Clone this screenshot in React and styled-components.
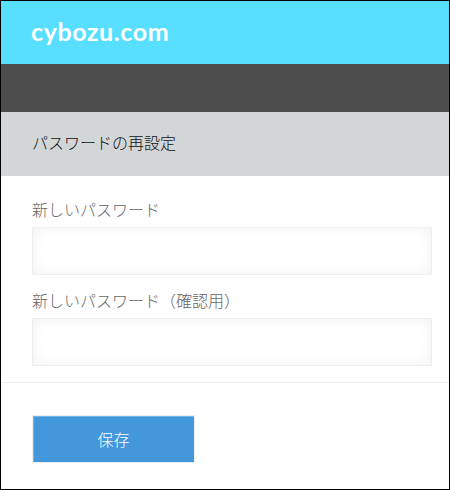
import React from "react";
import styled, { createGlobalStyle } from "styled-components";

const Global = createGlobalStyle`
  html, body { margin: 0; padding: 0; background: #fff; }
  * { box-sizing: border-box; }
`;

const cjk = `"Noto Sans CJK JP", "Noto Sans", sans-serif`;

const Frame = styled.div`
  width: 450px;
  height: 490px;
  border: 1px solid #000;
  background: #fff;
  display: flex;
  flex-direction: column;
  font-family: ${cjk};
  font-weight: 300;
  overflow: hidden;
`;

const Brand = styled.header`
  height: 63px;
  flex: none;
  background: #58dfff;
  display: flex;
  align-items: center;
  padding: 0 0 3px 30px;
`;

const Logo = styled.span`
  font-family: Lato, sans-serif;
  font-weight: 700;
  font-size: 25px;
  letter-spacing: 0.6px;
  color: #fff;
`;

const NavBar = styled.div`
  height: 48px;
  flex: none;
  background: #4d4d4d;
`;

const TitleBar = styled.div`
  height: 64px;
  flex: none;
  background: #d3d6d7;
  display: flex;
  align-items: center;
  padding: 0 0 4px 31px;
`;

const Title = styled.h1`
  margin: 0;
  font-size: 16px;
  font-weight: 300;
  color: #111;
`;

const Form = styled.form`
  flex: 1;
  display: flex;
  flex-direction: column;
`;

const Fields = styled.div`
  padding: 22px 17px 16px 31px;
  display: flex;
  flex-direction: column;
  gap: 14px;
  border-bottom: 1px solid #eeeeee;
`;

const Field = styled.label`
  display: flex;
  flex-direction: column;
  gap: 7px;
`;

const LabelText = styled.span`
  font-size: 16px;
  line-height: 22px;
  color: #666;
`;

const Input = styled.input`
  display: block;
  width: 100%;
  height: 48px;
  border: 1px solid #eeeeee;
  border-radius: 0;
  background: #fff;
  box-shadow: inset 0 0 14px rgba(0, 0, 0, 0.06);
  outline: none;
`;

const Actions = styled.div`
  padding: 32px 0 0 31px;
`;

const SaveButton = styled.button`
  display: block;
  width: 163px;
  height: 48px;
  padding: 0 0 1px;
  border: 1px solid #eeeeee;
  border-radius: 0;
  background: #4298db;
  box-shadow: inset 0 1px 0 #6fb6e8, inset 1px 0 0 #6fb6e8;
  color: #fff;
  font-family: ${cjk};
  font-weight: 300;
  font-size: 16px;
`;

export default function App() {
  return (
    <>
      <Global />
      <Frame>
        <Brand>
          <Logo>cybozu.com</Logo>
        </Brand>
        <NavBar />
        <TitleBar>
          <Title>パスワードの再設定</Title>
        </TitleBar>
        <Form onSubmit={(e) => e.preventDefault()}>
          <Fields>
            <Field>
              <LabelText>新しいパスワード</LabelText>
              <Input type="password" />
            </Field>
            <Field>
              <LabelText>新しいパスワード（確認用）</LabelText>
              <Input type="password" />
            </Field>
          </Fields>
          <Actions>
            <SaveButton type="submit">保存</SaveButton>
          </Actions>
        </Form>
      </Frame>
    </>
  );
}
